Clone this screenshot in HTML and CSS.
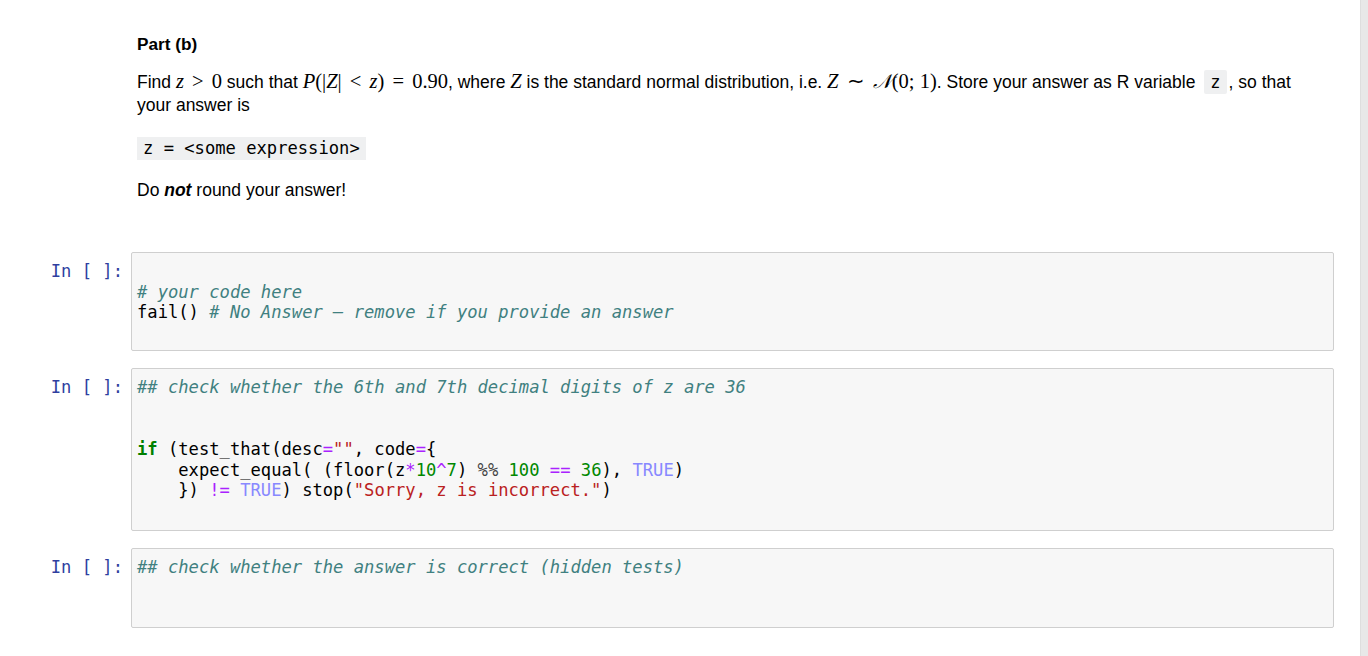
FILE: index.html
```html
<!DOCTYPE html>
<html lang="en">
<head>
<meta charset="utf-8">
<title>Part (b)</title>
<link rel="stylesheet" href="styles.css">
</head>
<body>
<div class="page">
  <main class="notebook">
    <section class="cell text-cell">
      <div class="prompt"></div>
      <div class="rendered">
        <p class="heading"><strong>Part (b)</strong></p>
        <p class="para">Find <span class="math"><i>z</i> <span class="rel">&gt;</span> 0</span> such that <span class="math"><i>P</i>(|<i>Z</i>| <span class="rel">&lt;</span> <i>z</i>) <span class="rel">=</span> 0.90</span>, where <span class="math"><i>Z</i></span> is the standard normal distribution, i.e. <span class="math"><i>Z</i> <span class="rel">∼</span> <span class="cal">𝒩</span>(0; 1)</span>. Store your answer as R variable <code class="inline">z</code>, so that your answer is</p>
        <pre class="md-code"><code>z = &lt;some expression&gt;</code></pre>
        <p class="para last">Do <strong><em>not</em></strong> round your answer!</p>
      </div>
    </section>

    <section class="cell code-cell first-code">
      <div class="prompt in">In&nbsp;[&nbsp;]:</div>
      <div class="input-area"><pre class="code">&nbsp;
<span class="cm">#&nbsp;your code here</span>
fail() <span class="cm"># No Answer – remove if you provide an answer</span>
&nbsp;</pre></div>
    </section>

    <section class="cell code-cell">
      <div class="prompt in">In&nbsp;[&nbsp;]:</div>
      <div class="input-area"><pre class="code"><span class="cm">## check whether the 6th and 7th decimal digits of z are 36</span>
&nbsp;
&nbsp;
<span class="kw">if</span> (test_that(desc<span class="op">=</span><span class="str">""</span>, code<span class="op">=</span>{
    expect_equal( (floor(z<span class="op">*</span><span class="num">10</span><span class="op">^</span><span class="num">7</span>) <span class="sp">%%</span> <span class="num">100</span> <span class="op">==</span> <span class="num">36</span>), <span class="atom">TRUE</span>)
    }) <span class="op">!=</span> <span class="atom">TRUE</span>) stop(<span class="str">"Sorry, z is incorrect."</span>)
&nbsp;</pre></div>
    </section>

    <section class="cell code-cell last-code">
      <div class="prompt in">In&nbsp;[&nbsp;]:</div>
      <div class="input-area"><pre class="code"><span class="cm">## check whether the answer is correct (hidden tests)</span>
&nbsp;
&nbsp;</pre></div>
    </section>
  </main>
  <div class="scroll-track"></div>
</div>
</body>
</html>
```

FILE: styles.css
```css
html, body {
  margin: 0;
  padding: 0;
  background: #ffffff;
}

body {
  font-family: "Liberation Sans", Arial, sans-serif;
  color: #000;
}

.page {
  display: flex;
  width: 1368px;
  height: 656px;
  overflow: hidden;
}

.notebook {
  flex: 1;
  display: flex;
  flex-direction: column;
  padding: 0 26px 0 15px;
}

.scroll-track {
  width: 7px;
  flex: 0 0 7px;
  background: #e8e8e8;
  border-left: 1px solid #dedede;
}

.cell {
  display: flex;
  align-items: flex-start;
}

.prompt {
  width: 108px;
  flex: 0 0 108px;
  padding-right: 8px;
  text-align: right;
  font-family: "DejaVu Sans Mono", monospace;
  font-size: 17.15px;
  line-height: 20.7px;
  color: #303f9f;
}

.prompt.in {
  padding-top: 9px;
}

/* markdown */
.text-cell {
  padding-top: 33px;
}

.rendered {
  flex: 1;
  padding: 0 34px 0 6px;
  font-size: 17.5px;
  line-height: 23px;
}

.rendered p {
  margin: 0;
}

.heading {
  font-size: 17.2px;
}

.para {
  margin-top: 14px !important;
}

.para.last {
  margin-top: 19px !important;
}

.math {
  font-family: "Liberation Serif", "Times New Roman", serif;
  font-size: 20.5px;
  white-space: nowrap;
}

.math i {
  font-style: italic;
}

.rel {
  margin: 0 3px;
}

.cal {
  font-family: "DejaVu Serif", "Liberation Serif", serif;
  font-style: italic;
  font-size: 19.5px;
}

code.inline {
  font-family: "DejaVu Sans Mono", monospace;
  font-size: 17px;
  background: #eff0f1;
  padding: 2px 6px;
  margin: 0 2px 0 4px;
  border-radius: 2px;
}

.md-code {
  display: inline-block;
  margin: 20px 0 0 0;
  padding: 1px 6px;
  background: #eff0f1;
  font-family: "DejaVu Sans Mono", monospace;
  font-size: 17.15px;
  line-height: 21px;
  color: #000;
}

.md-code code {
  font-family: inherit;
}

/* code cells */
.code-cell {
  margin-top: 17px;
}

.code-cell.first-code {
  margin-top: 50px;
}

.input-area {
  flex: 1;
  border: 1px solid #cfcfcf;
  border-radius: 2px;
  background: #f7f7f7;
}

.code {
  margin: 0;
  padding: 8px 5px 8px 5px;
  font-family: "DejaVu Sans Mono", monospace;
  font-size: 17.15px;
  line-height: 20.7px;
  color: #000;
  white-space: pre;
}

.first-code .code {
  padding-bottom: 6px;
}

.last-code .code {
  padding-bottom: 8px;
}

.cm { color: #408080; font-style: italic; }
.kw { color: #008000; font-weight: bold; }
.op { color: #aa22ff; }
.num { color: #008800; }
.atom { color: #8888ff; }
.str { color: #ba2121; }
.sp { color: #444444; }
```
